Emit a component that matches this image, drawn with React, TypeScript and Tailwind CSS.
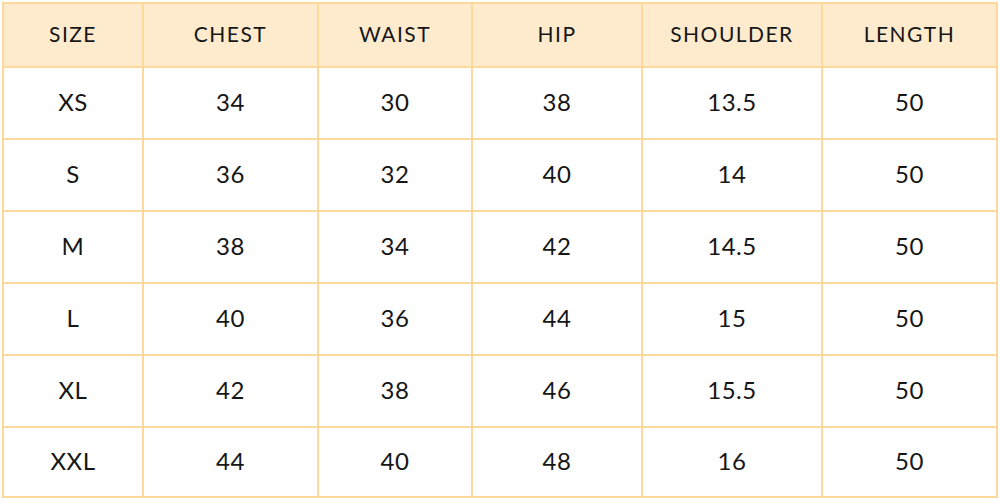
const headers = ['SIZE', 'CHEST', 'WAIST', 'HIP', 'SHOULDER', 'LENGTH'];

const rows = [
  ['XS', '34', '30', '38', '13.5', '50'],
  ['S', '36', '32', '40', '14', '50'],
  ['M', '38', '34', '42', '14.5', '50'],
  ['L', '40', '36', '44', '15', '50'],
  ['XL', '42', '38', '46', '15.5', '50'],
  ['XXL', '44', '40', '48', '16', '50'],
];

export default function App() {
  return (
    <div className="w-[1000px] h-[500px] bg-white pt-[2px] pl-[2px] font-['Lato',sans-serif] text-[#161616]">
      <div className="w-[996px] grid grid-cols-[138px_173px_152px_168px_178px_173px] grid-rows-[62px_repeat(5,70px)_68px] gap-[2px] p-[2px] bg-[#ffd99c]">
        {headers.map((h) => (
          <div
            key={h}
            className="bg-[#feebcd] flex items-center justify-center pb-[3px] text-[21px] tracking-[0.07em]"
          >
            {h}
          </div>
        ))}
        {rows.map((row) =>
          row.map((cell, i) => (
            <div
              key={row[0] + i}
              className="bg-white flex items-center justify-center pb-[2px] text-[24px] tracking-[0.02em]"
            >
              {cell}
            </div>
          ))
        )}
      </div>
    </div>
  );
}
